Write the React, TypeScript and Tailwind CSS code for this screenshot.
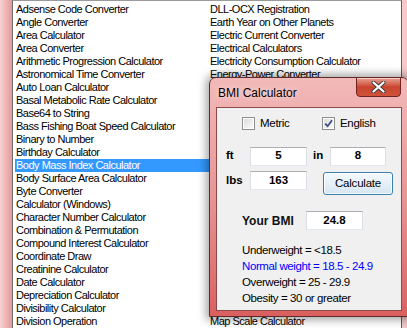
import React from 'react'

const leftItems = [
  'Adsense Code Converter', 'Angle Converter', 'Area Calculator', 'Area Converter',
  'Arithmetic Progression Calculator', 'Astronomical Time Converter', 'Auto Loan Calculator',
  'Basal Metabolic Rate Calculator', 'Base64 to String', 'Bass Fishing Boat Speed Calculator',
  'Binary to Number', 'Birthday Calculator', 'Body Mass Index Calculator',
  'Body Surface Area Calculator', 'Byte Converter', 'Calculator (Windows)',
  'Character Number Calculator', 'Combination & Permutation', 'Compound Interest Calculator',
  'Coordinate Draw', 'Creatinine Calculator', 'Date Calculator', 'Depreciation Calculator',
  'Divisibility Calculator', 'Division Operation',
]

// rows 6..23 of the second column sit under the dialog
const rightItems = [
  'DLL-OCX Registration', 'Earth Year on Other Planets', 'Electric Current Converter',
  'Electrical Calculators', 'Electricity Consumption Calculator', 'Energy-Power Converter',
  ...Array.from({ length: 18 }, () => ''),
  'Map Scale Calculator',
]

const SELECTED = 'Body Mass Index Calculator'

function ListColumn({ items, width }: { items: string[]; width: string }) {
  return (
    <div className={`flex flex-col ${width}`}>
      {items.map((it, i) => (
        <div
          key={i}
          className={`h-[13px] leading-[13px] whitespace-nowrap pl-[1px] ${it === SELECTED ? 'bg-[#3399ff] text-white' : 'text-black'}`}
        >
          {it}
        </div>
      ))}
    </div>
  )
}

function CheckBox({ checked, label }: { checked?: boolean; label: string }) {
  return (
    <div className="flex items-center gap-[5px]">
      <div className="w-[13px] h-[13px] border border-[#8e8f8f] bg-white p-[1px]">
        <div className="w-full h-full bg-gradient-to-br from-[#dcdcdc] to-[#fbfbfb] relative">
          {checked && (
            <svg viewBox="0 0 9 9" className="absolute inset-0 w-[9px] h-[9px]">
              <path d="M1.2 4.6 L3.6 7.2 L8 1.2" fill="none" stroke="#3b4f8a" strokeWidth="1.8" />
            </svg>
          )}
        </div>
      </div>
      <span className="text-[11.5px] tracking-[-0.3px] text-black">{label}</span>
    </div>
  )
}

function TextBox({ value, w, bold }: { value: string; w: string; bold?: boolean }) {
  return (
    <div className={`${w} h-[19px] border border-[#abadb3] border-b-[#e3e9ef] border-x-[#dbdfe6] bg-white flex items-center justify-center text-[11.5px] text-black ${bold ? 'font-bold' : ''}`}>
      {value}
    </div>
  )
}

export default function App() {
  return (
    <div className="w-[407px] h-[328px] relative overflow-hidden bg-[#f3c3c3] flex" style={{ fontFamily: '"Liberation Sans", Arial, sans-serif' }}>
      {/* background window frame */}
      <div className="w-[12px] h-full bg-gradient-to-r from-[#f7d3d3] via-[#efb5b5] to-[#e39a9a]" />

      {/* list box */}
      <div className="w-[390px] h-[340px] border-l border-t border-r border-l-[#6d6d6d] border-t-[#9a9a9a] border-r-[#6b5a5a] bg-white pl-[2px] pt-[2px] flex text-[11px] tracking-[-0.5px]">
        <ListColumn items={leftItems} width="w-[194px]" />
        <ListColumn items={rightItems} width="w-[190px]" />
      </div>

      <div className="flex-1 h-full bg-[#f7c9c9]" />

      {/* BMI dialog */}
      <div className="absolute left-[209px] top-[77px] w-[200px] h-[240px] rounded-t-[7px] border border-[#5e2a2a] bg-gradient-to-b from-[#f2b9b9] via-[#e89595] to-[#d9605f] shadow-[0_0_9px_3px_rgba(0,0,0,0.35)] flex flex-col px-[6px] pb-[5px]">
        <div className="h-[29px] flex items-center pl-[2px] pt-[1px] text-[12px] text-black [text-shadow:0_0_6px_rgba(255,255,255,0.9)]">
          BMI Calculator
        </div>
        <div className="absolute right-[7px] top-[-1px] w-[45px] h-[20px] rounded-b-[4px] border border-[#6e2222] bg-gradient-to-b from-[#e8a295] via-[#c8442f] to-[#d0533a] flex items-center justify-center shadow-[inset_0_1px_0_rgba(255,255,255,0.5)]">
          <svg viewBox="0 0 14 12" className="w-[15px] h-[12px]">
            <path d="M2 1.5 L12 10.5 M12 1.5 L2 10.5" stroke="#3a3a3a" strokeWidth="4" strokeLinecap="round" />
            <path d="M2 1.5 L12 10.5 M12 1.5 L2 10.5" stroke="#ffffff" strokeWidth="2.2" strokeLinecap="round" />
          </svg>
        </div>

        {/* client area */}
        <div className="flex-1 border border-[#8a4a4a] bg-[#f0f0f0] flex flex-col">
          <div className="mt-[9px] pl-[25px] flex h-[13px] items-center">
            <div className="w-[80px]"><CheckBox label="Metric" /></div>
            <CheckBox checked label="English" />
          </div>

          <div className="mt-[17px] pl-[9px] flex items-center h-[18px] text-[11.5px] font-bold text-black">
            <span className="w-[24px]">ft</span>
            <TextBox value="5" w="w-[57px]" />
            <span className="w-[17px] ml-[6px]">in</span>
            <TextBox value="8" w="w-[56px]" />
          </div>

          <div className="mt-[6px] pl-[9px] flex items-start text-[11.5px] font-bold text-black">
            <span className="w-[24px] leading-[19px]">lbs</span>
            <TextBox value="163" w="w-[57px]" />
            <div className="ml-[16px] mt-[1px] w-[70px] h-[23px] rounded-[3px] border border-[#3c7fb1] bg-gradient-to-b from-[#f4f9fd] via-[#e6f0f8] to-[#d5e6f3] flex items-center justify-center font-normal text-[11.5px] tracking-[-0.2px] shadow-[inset_0_0_0_1px_rgba(255,255,255,0.8)]">
              Calculate
            </div>
          </div>

          <div className="mt-[16px] pl-[25px] flex items-center text-[12px] font-bold text-[#111]">
            <span className="w-[64px]">Your BMI</span>
            <TextBox value="24.8" w="w-[57px]" bold />
          </div>

          <div className="mt-[12px] pl-[25px] flex flex-col text-[11.5px] leading-[16px] tracking-[-0.4px] text-black">
            <span>Underweight = &lt;18.5</span>
            <span className="text-[#0000ff]">Normal weight = 18.5 - 24.9</span>
            <span>Overweight = 25 - 29.9</span>
            <span>Obesity = 30 or greater</span>
          </div>
        </div>
      </div>
    </div>
  )
}
